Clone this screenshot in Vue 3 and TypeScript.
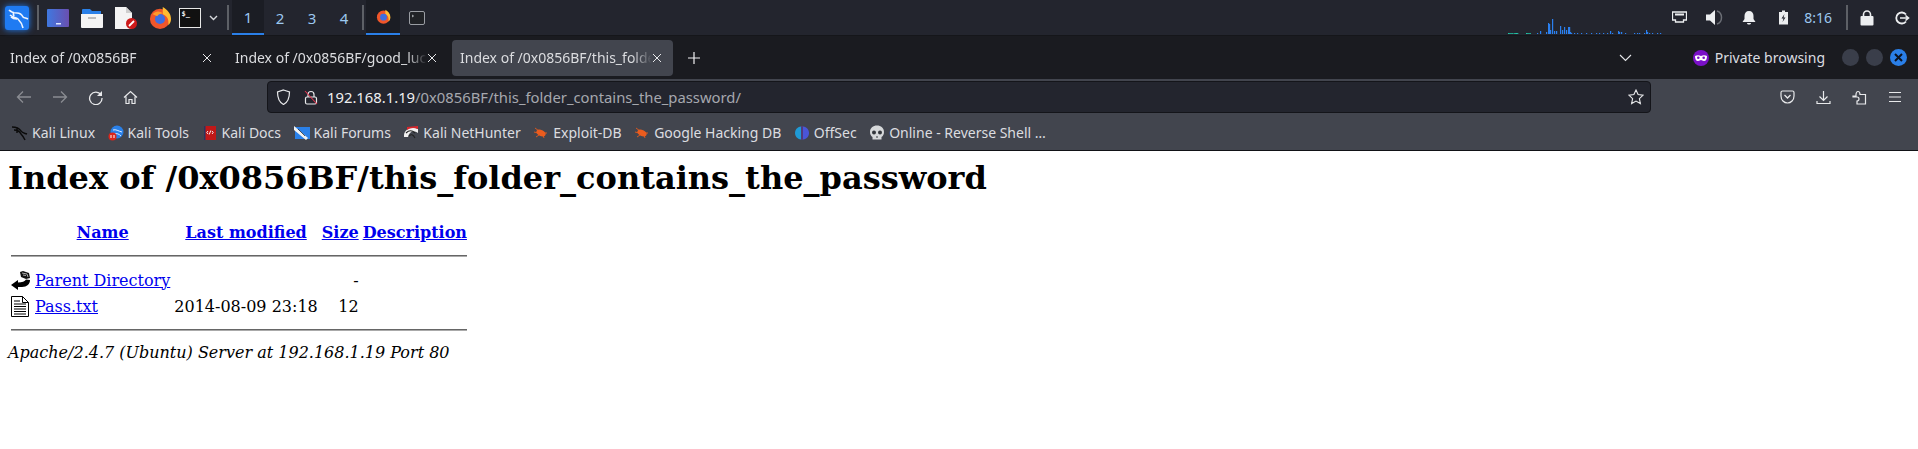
<template>
  <div class="desktop">
    <!-- kali panel -->
    <header class="panel">
      <div class="menu-btn">
        <svg width="24" height="24" viewBox="0 0 24 24">
          <rect width="24" height="24" rx="3" fill="#1f7bf2" />
          <path d="M4 4c2 2 5 3 8 3 3 0 5 2 6 4 1 1 3 1 5 2M5 9c3 3 6 2 8 4 2 2 4 4 5 9M9 10c-1-2-1-3 0-4M12 13c-3 0-5-1-6-2" fill="none" stroke="#eef5ff" stroke-width="1.6" />
        </svg>
      </div>
      <i class="sep first"></i>
      <div class="launcher">
        <svg width="22" height="18" viewBox="0 0 22 18">
          <defs>
            <linearGradient id="dg" x1="0" x2="1"><stop offset="0" stop-color="#3f78e0" /><stop offset="1" stop-color="#6a4fb0" /></linearGradient>
          </defs>
          <rect width="22" height="18" rx="1" fill="url(#dg)" />
          <rect x="9" y="14" width="5" height="1.500" fill="#dfe8ff" />
        </svg>
        <svg width="22" height="20" viewBox="0 0 22 20">
          <path d="M1 2a1 1 0 0 1 1-1h7l2 2h9v4H1z" fill="#2a80e8" />
          <path d="M0 6h22v13a1 1 0 0 1-1 1H1a1 1 0 0 1-1-1z" fill="#f4f4f4" />
          <rect x="7" y="9" width="8" height="2" fill="#bdbdbd" />
        </svg>
        <svg width="22" height="22" viewBox="0 0 22 22">
          <path d="M0 0h11l6 6v16H0z" fill="#f4f4f4" />
          <path d="M11 0l6 6h-6z" fill="#cfcfcf" />
          <circle cx="16.500" cy="16.500" r="5.500" fill="#cc1a1a" />
          <path d="M14 19l5-5" stroke="#fff" stroke-width="1.800" />
        </svg>
        <svg width="22" height="22" viewBox="0 0 24 24">
          <circle cx="12" cy="13" r="11" fill="#f0562a" />
          <path d="M15 0c5 3 9 7 9 13 0 3-1 5-3 7 1-6-1-10-6-12z" fill="#ffbb32" />
          <circle cx="12" cy="13" r="5.500" fill="#3f6ee0" />
          <path d="M4 8c3-4 8-4 11-1-3 0-5 1-6 3z" fill="#ff9a2a" />
        </svg>
        <svg class="term" width="22" height="20" viewBox="0 0 22 20">
          <rect x=".5" y=".5" width="21" height="19" fill="#111" stroke="#e8e8e8" />
          <text x="2.500" y="8" class="term-glyph">$_</text>
        </svg>
        <svg class="chev" width="9" height="6" viewBox="0 0 9 6"><path d="M1 1l3.500 3.500L8 1" fill="none" stroke="#d6d8dc" stroke-width="1.400" /></svg>
      </div>
      <i class="sep after-launcher"></i>
      <nav class="workspaces">
        <span v-for="n in 4" :key="n" class="ws" :class="{ on: n === 1 }">{{ n }}</span>
      </nav>
      <i class="sep"></i>
      <div class="tasks">
        <div class="task on">
          <svg width="15" height="15" viewBox="0 0 24 24">
            <circle cx="12" cy="13" r="10.500" fill="#f0562a" />
            <path d="M15 1c5 3 8 7 8 12 0 3-1 5-3 7 1-6-1-10-5-12z" fill="#ffbb32" />
            <circle cx="12" cy="13" r="5.500" fill="#3f6ee0" />
          </svg>
        </div>
        <div class="task">
          <svg width="16" height="14" viewBox="0 0 16 14">
            <rect x=".5" y=".5" width="15" height="13" rx="1.500" fill="#202226" stroke="#9a9da3" />
            <path d="M3 4l1.500 1L3 6" fill="none" stroke="#d6d8dc" stroke-width=".8" />
          </svg>
        </div>
      </div>
      <svg class="cpu" width="156" height="35" viewBox="0 0 156 35">
        <rect v-for="(b, i) in cpuBars" :key="i" :x="b.x" :y="34 - b.h" width="1.200" :height="b.h" :fill="b.c" />
      </svg>
      <div class="tray">
        <svg width="15" height="13" viewBox="0 0 15 13">
          <path d="M.5 1h14v8h-3v2h-8V9h-3z" fill="none" stroke="#eceef0" stroke-width="1.300" />
          <path d="M3 2.500h9v2H3z" fill="#eceef0" />
        </svg>
        <svg class="t-vol" width="18" height="17" viewBox="0 0 18 17">
          <path d="M0 5.500h4L9 1v15l-5-4.500H0z" fill="#eceef0" />
          <path d="M11 2c6 2 6 11 0 13" fill="none" stroke="#6b6e75" stroke-width="1.500" />
        </svg>
        <svg class="t-bell" width="14" height="15" viewBox="0 0 14 15">
          <path d="M7 1c3 0 4.500 2 4.500 5v3l2 3H.5l2-3V6C2.500 3 4 1 7 1z" fill="#eceef0" />
          <path d="M5 13h4c0 2-4 2-4 0z" fill="#eceef0" />
        </svg>
        <svg class="t-bat" width="11" height="15" viewBox="0 0 11 15">
          <path d="M1 2h3V.5h3V2h3v12.500H1z" fill="#eceef0" />
          <path d="M6.500 4L3.500 8.500h2L4.500 12l3-4.500h-2z" fill="#23252e" />
        </svg>
        <span class="clock">8:16</span>
        <i class="sep tall"></i>
        <svg class="t-lock" width="14" height="16" viewBox="0 0 14 16">
          <rect x="0.500" y="6" width="13" height="9.500" rx="1" fill="#eceef0" />
          <path d="M3.500 6.500V4.500a3.500 3.500 0 0 1 7 0v2" fill="none" stroke="#eceef0" stroke-width="1.600" />
        </svg>
        <svg class="t-out" width="15" height="14" viewBox="0 0 15 14">
          <path d="M11 3.500a5.500 5.500 0 1 0 0 7" fill="none" stroke="#eceef0" stroke-width="1.800" />
          <path d="M5 7h8M10.500 4.500L13.500 7l-3 2.500" fill="none" stroke="#eceef0" stroke-width="1.600" />
        </svg>
      </div>
    </header>

    <!-- firefox tab strip -->
    <div class="tabstrip">
      <div v-for="t in tabs" :key="t.title" class="tab" :class="{ active: t.active }">
        <span class="tab-title">{{ t.title }}</span>
        <svg class="tab-x" width="10" height="10" viewBox="0 0 10 10"><path d="M1 1l8 8M9 1l-8 8" stroke="#e6e7ea" stroke-width="1" /></svg>
      </div>
      <svg class="plus" width="12" height="12" viewBox="0 0 12 12"><path d="M6 0v12M0 6h12" stroke="#f2f2f4" stroke-width="1.200" /></svg>
      <svg class="list-all" width="13" height="8" viewBox="0 0 13 8"><path d="M1 1l5.500 5.500L12 1" fill="none" stroke="#e6e7ea" stroke-width="1.100" /></svg>
      <div class="private">
        <svg width="16" height="16" viewBox="0 0 16 16">
          <circle cx="8" cy="8" r="8" fill="#7a10c8" />
          <path d="M2 6c2-1 4-1 6 0 2-1 4-1 6 0 0 3-1 5-3 5-1.500 0-2-1-3-1s-1.500 1-3 1C3 11 2 9 2 6z" fill="#fff" />
          <circle cx="5.300" cy="7.800" r="1.300" fill="#7a10c8" />
          <circle cx="10.700" cy="7.800" r="1.300" fill="#7a10c8" />
        </svg>
        <span>Private browsing</span>
      </div>
      <div class="win-btns">
        <span class="dot"></span>
        <span class="dot"></span>
        <span class="dot close">
          <svg width="9" height="9" viewBox="0 0 9 9"><path d="M1 1l7 7M8 1L1 8" stroke="#0c1220" stroke-width="2" /></svg>
        </span>
      </div>
    </div>

    <!-- toolbar -->
    <div class="toolbar">
      <div class="nav-btns">
        <svg width="16" height="14" viewBox="0 0 16 14"><path d="M15 7H1.500M7 1.500L1.500 7 7 12.500" fill="none" stroke="#8a8c92" stroke-width="1.300" /></svg>
        <svg width="16" height="14" viewBox="0 0 16 14"><path d="M1 7h13.500M9 1.500L14.500 7 9 12.500" fill="none" stroke="#8a8c92" stroke-width="1.300" /></svg>
        <svg width="15" height="15" viewBox="0 0 15 15"><path d="M13 5a6.200 6.200 0 1 0 1 3" fill="none" stroke="#e8e9eb" stroke-width="1.300" /><path d="M14 1v5H9z" fill="#e8e9eb" /></svg>
        <svg width="15" height="15" viewBox="0 0 15 15"><path d="M1 7.500L7.500 1.500 14 7.500M3 6.500v7h3v-4h3v4h3v-7" fill="none" stroke="#e8e9eb" stroke-width="1.200" /></svg>
      </div>
      <div class="urlbar">
        <svg width="15" height="16" viewBox="0 0 15 16"><path d="M7.500 1l6 2c0 6-1 10-6 12.500C2.500 13 1.500 9 1.500 3z" fill="none" stroke="#e8e9eb" stroke-width="1.200" /></svg>
        <svg class="lock" width="14" height="15" viewBox="0 0 14 15">
          <path d="M4 7V4.500a3 3 0 0 1 6 0V7" fill="none" stroke="#e8e9eb" stroke-width="1.200" />
          <rect x="1.500" y="7" width="11" height="7" rx="1.500" fill="none" stroke="#e8e9eb" stroke-width="1.200" />
          <path d="M1 1l12 13" stroke="#e0364f" stroke-width="1.100" />
        </svg>
        <span class="url"><b>192.168.1.19</b>/0x0856BF/this_folder_contains_the_password/</span>
        <svg class="star" width="16" height="16" viewBox="0 0 16 16"><path d="M8 1l2.100 4.600 5 .6-3.700 3.400 1 5L8 12.100 3.600 14.600l1-5L.9 6.200l5-.6z" fill="none" stroke="#e8e9eb" stroke-width="1.100" /></svg>
      </div>
      <div class="tools">
        <svg width="15" height="14" viewBox="0 0 15 14"><path d="M1 2.500C1 1.500 1.500 1 2.500 1h10c1 0 1.500.5 1.500 1.500V6c0 4-3 7-6.500 7S1 10 1 6z" fill="none" stroke="#e8e9eb" stroke-width="1.200" /><path d="M4.500 5L7.500 8l3-3" fill="none" stroke="#e8e9eb" stroke-width="1.300" /></svg>
        <svg width="15" height="15" viewBox="0 0 15 15"><path d="M7.500 1v9M3.500 6.500l4 4 4-4M1 11v2.500h13V11" fill="none" stroke="#e8e9eb" stroke-width="1.200" /></svg>
        <svg width="15" height="15" viewBox="0 0 15 15"><path d="M1 6h3V4.500C4 2.500 5 1.500 6 1.500S8 2.500 8 4.500H13.500V14H5v-3c1 0 2-.500 2-2S6 7 5 7H1z" fill="none" stroke="#e8e9eb" stroke-width="1.200" /></svg>
        <svg width="14" height="12" viewBox="0 0 14 12"><path d="M1 1.500h12M1 6h12M1 10.500h12" stroke="#e8e9eb" stroke-width="1.200" /></svg>
      </div>
    </div>

    <!-- bookmarks -->
    <div class="bookmarks">
      <div v-for="b in bookmarks" :key="b.label" class="bm">
        <svg width="16" height="16" viewBox="0 0 16 16">
          <template v-if="b.icon === 'kali'">
            <path d="M0 2c4 0 7 1 9 4 1 2 3 2 6 3M2 5c4 0 6 2 7 4 2 2 3 4 4 6M5 3v5" fill="none" stroke="#0b0b0b" stroke-width="1.500" />
          </template>
          <template v-else-if="b.icon === 'tools'">
            <circle cx="9" cy="7" r="6.500" fill="#2a80e8" />
            <path d="M5 5c3-1 5 1 9 2M6 9c3-1 5 0 7 2" fill="none" stroke="#dcebff" stroke-width="1" />
            <circle cx="4.500" cy="11.500" r="4" fill="#d9261c" />
            <path d="M3 10v3M6 10v3" stroke="#fff" stroke-width="1" />
          </template>
          <template v-else-if="b.icon === 'docs'">
            <rect x="2" y="1" width="12" height="14" fill="#c01818" />
            <rect x="2" y="1" width="1.500" height="14" fill="#2a3560" />
            <path d="M6 6L4.800 7.500 6 9M10 6l1.200 1.500L10 9M8.800 5.500L7.200 9.500" fill="none" stroke="#fff" stroke-width=".9" />
          </template>
          <template v-else-if="b.icon === 'forums'">
            <rect x="1" y="2" width="15" height="12" fill="#2a80e8" />
            <path d="M0 1l14 12-2 2L0 5z" fill="#f2f2f2" />
            <path d="M4 4l7 7" stroke="#333" stroke-width=".8" />
          </template>
          <template v-else-if="b.icon === 'hunter'">
            <path d="M1 10C2 4 8 1 15 4v4C10 5 6 7 5 12H1z" fill="#f1f1f1" />
            <path d="M4 2L15 1v3C10 2 7 3 4 5z" fill="#d9262c" />
            <path d="M3 8c3-3 6-3 9 0M6 11c2-2 4-2 6 2" fill="none" stroke="#222" stroke-width="1.100" />
          </template>
          <template v-else-if="b.icon === 'bug'">
            <path d="M2 3l4 3M1 7l4 1M3 12l3-2M11 13l-1-3M14 8h-3" stroke="#e85a1c" stroke-width=".9" />
            <ellipse cx="8" cy="8" rx="5" ry="3" transform="rotate(25 8 8)" fill="#ea5c1e" />
          </template>
          <template v-else-if="b.icon === 'offsec'">
            <path d="M7 1.500C3 2 1 5 1 8s2 6 6 6.500z" fill="#1f9ad6" />
            <path d="M9 1.500C13 2 15 5 15 8s-2 6-6 6.500z" fill="#4a55d8" />
            <path d="M8 1v14" stroke="#6a2ec0" stroke-width=".8" />
          </template>
          <template v-else>
            <path d="M8 .5c4 0 7 2.500 7 6.500 0 2.500-1 4-2.500 5v2.500h-9V12C2 11 1 9.500 1 7 1 3 4 .5 8 .5z" fill="#d6d8da" />
            <circle cx="5" cy="7.500" r="2" fill="#33363c" />
            <circle cx="11" cy="7.500" r="2" fill="#33363c" />
            <path d="M7 12h2" stroke="#33363c" stroke-width="1" />
          </template>
        </svg>
        <span>{{ b.label }}</span>
      </div>
    </div>

    <!-- apache listing -->
    <main class="page">
      <h1>Index of /0x0856BF/this_folder_contains_the_password</h1>
      <table>
        <tbody>
          <tr>
            <th></th>
            <th><a href="#">Name</a></th>
            <th><a href="#">Last modified</a></th>
            <th><a href="#">Size</a></th>
            <th><a href="#">Description</a></th>
          </tr>
          <tr><th colspan="5"><hr class="hr-top" /></th></tr>
          <tr>
            <td class="ico">
              <svg width="20" height="20" viewBox="0 0 20 20">
                <path d="M0 15l7-5v2.500c4 0 7-1 8-3l4 .5c0 4-3 7-8 7H7v3z" fill="#000" />
                <path d="M9 2l3-1 6 2 1 5-4 1-5-2z" fill="#111" />
                <path d="M11 3l5 1 1 3M12 5l3 .5" fill="none" stroke="#aaa" stroke-width="1" />
              </svg>
            </td>
            <td><a href="#">Parent Directory</a></td>
            <td></td>
            <td class="r">-</td>
            <td></td>
          </tr>
          <tr>
            <td class="ico">
              <svg width="18" height="21" viewBox="0 0 18 21">
                <path d="M.5.5h11l6 6v14H.5z" fill="#fff" stroke="#000" />
                <path d="M11.500.5v6h6" fill="none" stroke="#000" />
                <path d="M3 5h6M3 8h12M3 10.500h12M3 13h12M3 15.500h12M3 18h12" stroke="#000" stroke-width="1.200" />
              </svg>
            </td>
            <td><a href="#">Pass.txt</a></td>
            <td class="r">2014-08-09 23:18</td>
            <td class="r">12</td>
            <td></td>
          </tr>
          <tr><th colspan="5"><hr /></th></tr>
        </tbody>
      </table>
      <address>Apache/2.4.7 (Ubuntu) Server at 192.168.1.19 Port 80</address>
    </main>
  </div>
</template>

<script setup lang="ts">
type Bar = { x: number; h: number; c: string }

const tabs = [
  { title: 'Index of /0x0856BF', active: false },
  { title: 'Index of /0x0856BF/good_luck', active: false },
  { title: 'Index of /0x0856BF/this_folder_contains_the_password', active: true },
]

const bookmarks = [
  { label: 'Kali Linux', icon: 'kali' },
  { label: 'Kali Tools', icon: 'tools' },
  { label: 'Kali Docs', icon: 'docs' },
  { label: 'Kali Forums', icon: 'forums' },
  { label: 'Kali NetHunter', icon: 'hunter' },
  { label: 'Exploit-DB', icon: 'bug' },
  { label: 'Google Hacking DB', icon: 'bug' },
  { label: 'OffSec', icon: 'offsec' },
  { label: 'Online - Reverse Shell …', icon: 'skull' },
]

// cpu graph: x offset, height
const spikes: [number, number][] = [
  [29, 1], [32, 3], [38, 2], [40, 11], [41, 10], [42, 4], [44, 15], [46, 3], [48, 3], [52, 8], [54, 4],
  [56, 7], [58, 4], [60, 7], [61, 7], [62, 2], [63, 1], [66, 1], [69, 1], [73, 1], [78, 1], [83, 1],
  [88, 1], [91, 1], [95, 1], [99, 1], [102, 3], [104, 1], [110, 3], [111, 2], [113, 2], [117, 1],
  [126, 1], [129, 1], [131, 1], [136, 1], [138, 4], [139, 2], [141, 1], [144, 1], [149, 1], [152, 1],
]
const teal = [0, 1.2, 2.4, 3.6, 5.5, 6.7, 7.9, 9.1, 18, 19.2, 20.4, 21.6]
const cpuBars: Bar[] = [
  ...teal.map((x) => ({ x, h: 1, c: '#21c8a8' })),
  ...spikes.map(([x, h]) => ({ x, h, c: '#2a80f0' })),
]
</script>

<style>
html,
body {
  margin: 0;
  background: #fff;
}
</style>

<style scoped>
.desktop {
  width: 1918px;
  height: 449px;
  overflow: hidden;
  background: #fff;
}

/* 顶部面板 */
.panel {
  height: 35px;
  display: flex;
  align-items: center;
  background: #23252e;
  border-bottom: 1px solid #15161a;
}
.menu-btn {
  width: 24px;
  height: 24px;
  margin-left: 5px;
  filter: drop-shadow(0 0 3px #1f7bf2);
}
.sep {
  flex: none;
  width: 2px;
  height: 25px;
  margin-left: 2px;
  background: #5d6066;
}
.sep.first {
  margin-left: 8px;
}
.sep.after-launcher {
  margin-left: 9px;
}
.launcher {
  display: flex;
  align-items: center;
  gap: 12px;
  margin-left: 8px;
}
.term {
  margin-left: -4px;
}
.term-glyph {
  fill: #f2f2f2;
  font: bold 7px "DejaVu Sans Mono", monospace;
}
.chev {
  margin-left: -4px;
}
.workspaces {
  display: flex;
  height: 35px;
  margin-left: 3px;
}
.ws {
  width: 32px;
  height: 35px;
  box-sizing: border-box;
  display: flex;
  align-items: center;
  justify-content: center;
  font: 15px "Noto Sans", sans-serif;
  color: #9cc8f0;
}
.ws.on {
  background: #1b1d24;
  border-bottom: 2px solid #2a7fe8;
}
.tasks {
  display: flex;
  height: 35px;
  margin-left: 2px;
}
.task {
  width: 34px;
  height: 35px;
  box-sizing: border-box;
  display: flex;
  align-items: center;
  justify-content: center;
}
.task.on {
  background: #1b1d24;
  border-bottom: 2px solid #2a7fe8;
}
.cpu {
  margin-left: auto;
}
.tray {
  display: flex;
  align-items: center;
  height: 35px;
  margin-left: 8px;
  margin-right: 8px;
}
.t-vol {
  margin-left: 19px;
}
.t-bell {
  margin-left: 18px;
}
.t-bat {
  margin-left: 22px;
}
.clock {
  margin-left: 15px;
  font: 14px "Noto Sans", sans-serif;
  color: #9cc8f0;
}
.sep.tall {
  margin-left: 14px;
}
.t-lock {
  margin-left: 12px;
}
.t-out {
  margin-left: 21px;
}

/* 标签栏 */
.tabstrip {
  height: 43px;
  display: flex;
  align-items: center;
  background: #1a1b20;
  font: 14px "Noto Sans", sans-serif;
  color: #dcdde0;
}
.tab {
  width: 225px;
  height: 36px;
  box-sizing: border-box;
  padding: 0 10px;
  display: flex;
  align-items: center;
  border-radius: 4px;
}
.tab.active {
  width: 221px;
  margin-left: 2px;
  padding: 0 8px;
  background: #42454e;
}
.tab-title {
  flex: 1;
  min-width: 0;
  overflow: hidden;
  white-space: nowrap;
  -webkit-mask-image: linear-gradient(90deg, #000 calc(100% - 20px), transparent 100%);
  mask-image: linear-gradient(90deg, #000 calc(100% - 20px), transparent 100%);
}
.tab-x {
  flex: none;
  margin-right: 3px;
}
.plus {
  margin-left: 15px;
}
.list-all {
  margin-left: auto;
}
.private {
  display: flex;
  align-items: center;
  gap: 6px;
  margin-left: 61px;
}
.win-btns {
  display: flex;
  gap: 7px;
  margin-left: 17px;
  margin-right: 11px;
}
.dot {
  width: 17px;
  height: 17px;
  border-radius: 50%;
  background: #3a3e4a;
  display: flex;
  align-items: center;
  justify-content: center;
}
.dot.close {
  background: #2a7fe8;
}

/* 工具栏 */
.toolbar {
  height: 36px;
  display: flex;
  align-items: center;
  background: #42454e;
}
.nav-btns {
  flex: none;
  display: flex;
  align-items: center;
  gap: 20px;
  width: 267px;
  padding-left: 16px;
  box-sizing: border-box;
}
.urlbar {
  flex: none;
  width: 1384px;
  height: 32px;
  box-sizing: border-box;
  display: flex;
  align-items: center;
  padding: 0 6px 0 8px;
  background: #23252e;
  border: 1px solid #14151a;
  border-radius: 4px;
  font: 14.8px "Noto Sans", sans-serif;
  color: #a6a8ae;
}
.lock {
  margin-left: 13px;
}
.url {
  margin-left: 9px;
  white-space: nowrap;
}
.url b {
  font-weight: 400;
  color: #eeeff1;
}
.star {
  margin-left: auto;
}
.tools {
  display: flex;
  align-items: center;
  gap: 21px;
  margin-left: 129px;
}

/* 书签栏 */
.bookmarks {
  height: 36px;
  display: flex;
  align-items: center;
  padding-left: 12px;
  gap: 12.5px;
  background: #42454e;
  border-bottom: 1px solid #111216;
  box-sizing: border-box;
  font: 14px "Noto Sans", sans-serif;
  color: #dcdde0;
}
.bm {
  display: flex;
  align-items: center;
  gap: 4px;
  white-space: nowrap;
}

/* 页面内容 */
.page {
  padding: 0 8px;
  font: 16px "DejaVu Serif", serif;
  color: #000;
}
h1 {
  margin: 0 0 23px;
  padding-top: 9px;
  font-size: 32px;
  font-weight: 700;
  line-height: 37px;
  white-space: nowrap;
}
table {
  border-spacing: 2px;
}
th {
  padding: 1px;
  font-weight: 700;
  text-align: center;
}
td {
  padding: 1px;
}
td.r {
  text-align: right;
}
td.ico {
  height: 22px;
  line-height: 0;
}
a {
  color: #0000ee;
}
hr {
  margin: 8px 0;
  border: 0;
  border-top: 1px solid #666;
  border-bottom: 1px solid #aaa;
}
hr.hr-top {
  margin: 9px 0 8px;
}
address {
  margin-top: 1px;
  font-style: italic;
}
</style>
